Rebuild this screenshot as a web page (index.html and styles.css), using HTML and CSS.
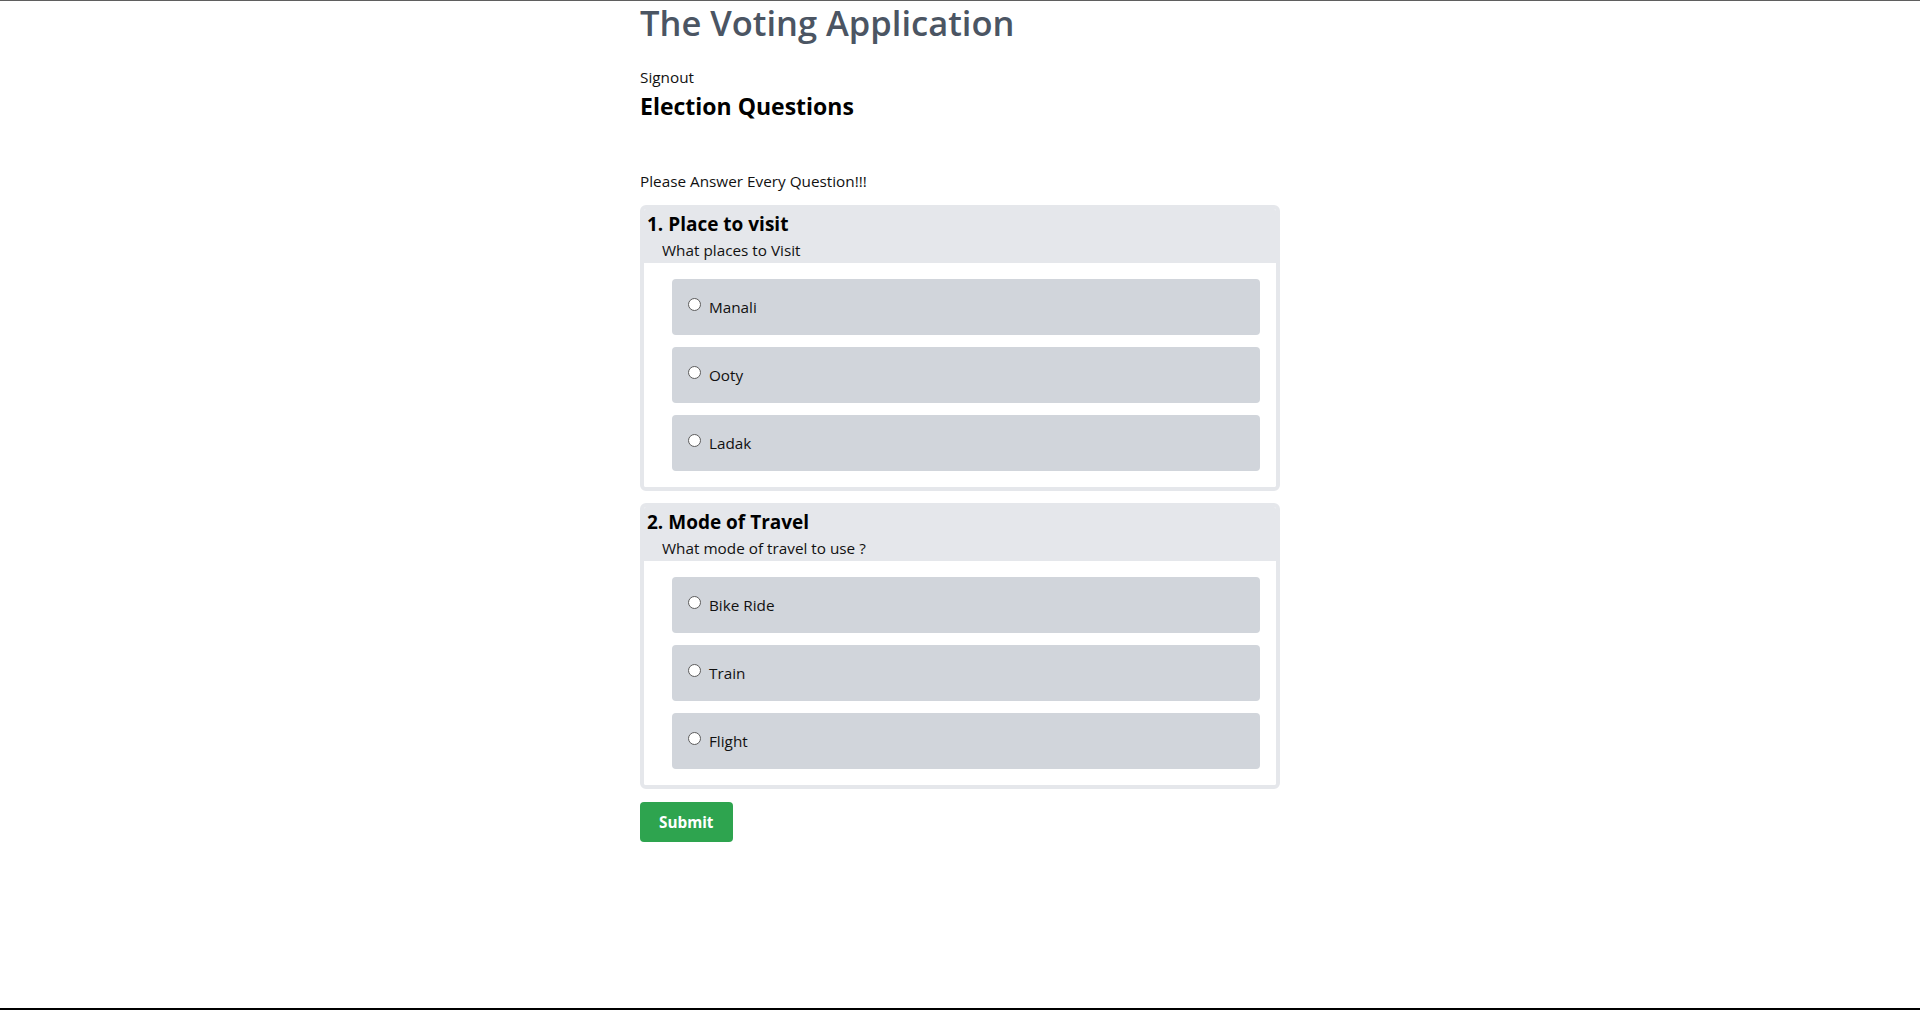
FILE: index.html
```html
<!DOCTYPE html>
<html lang="en">
<head>
<meta charset="utf-8">
<title>The Voting Application</title>
<link rel="stylesheet" href="styles.css">
</head>
<body>
<main class="container">
  <h1 class="app-title">The Voting Application</h1>
  <a class="signout" href="#">Signout</a>
  <h2 class="section-title">Election Questions</h2>
  <p class="notice">Please Answer Every Question!!!</p>
  <form class="ballot">
    <section class="question">
      <header class="q-head">
        <h3 class="q-title">1. Place to visit</h3>
        <p class="q-desc">What places to Visit</p>
      </header>
      <div class="q-options">
        <label class="option"><input type="radio" name="q1"> Manali</label>
        <label class="option"><input type="radio" name="q1"> Ooty</label>
        <label class="option"><input type="radio" name="q1"> Ladak</label>
      </div>
    </section>
    <section class="question">
      <header class="q-head">
        <h3 class="q-title">2. Mode of Travel</h3>
        <p class="q-desc">What mode of travel to use ?</p>
      </header>
      <div class="q-options">
        <label class="option"><input type="radio" name="q2"> Bike Ride</label>
        <label class="option"><input type="radio" name="q2"> Train</label>
        <label class="option"><input type="radio" name="q2"> Flight</label>
      </div>
    </section>
    <button type="submit" class="submit">Submit</button>
  </form>
</main>
</body>
</html>
```
FILE: styles.css
```css
* { box-sizing: border-box; }

html, body { height: 100%; }

body {
  margin: 0;
  min-height: 100vh;
  border-top: 1px solid #5f5f5f;
  border-bottom: 2px solid #000;
  background: #fff;
  color: #111;
  font-family: "Open Sans", "Noto Sans", "Liberation Sans", sans-serif;
  font-size: 15.3px;
  line-height: 24px;
}

.container {
  width: 640px;
  margin: 0 auto;
}

.app-title {
  margin: 0;
  padding-top: 2px;
  font-size: 34.5px;
  line-height: 40px;
  font-weight: 600;
  color: #4b5563;
}

.signout {
  display: block;
  margin-top: 22px;
  color: #111;
  text-decoration: none;
  font-size: 15.3px;
  line-height: 24px;
}

.section-title {
  margin: 1px 0 0;
  font-size: 23px;
  line-height: 32px;
  font-weight: 700;
  color: #000;
}

.notice {
  margin: 47px 0 0;
  font-size: 15.3px;
  line-height: 24px;
}

.ballot {
  margin-top: 12px;
  display: flex;
  flex-direction: column;
  align-items: flex-start;
}

.question {
  align-self: stretch;
  border: 4px solid #e5e7eb;
  border-radius: 6px;
  margin-bottom: 12px;
  overflow: hidden;
}

.q-head {
  background: #e5e7eb;
  padding: 2px 4px 1px 3px;
}

.q-title {
  margin: 0;
  font-size: 19px;
  line-height: 27px;
  font-weight: 700;
  color: #000;
}

.q-desc {
  margin: 0;
  padding-left: 15px;
  font-size: 15.3px;
  line-height: 24px;
}

.q-options {
  background: #fff;
  padding: 16px 16px 16px 28px;
  display: flex;
  flex-direction: column;
  gap: 12px;
}

.option {
  display: block;
  background: #d1d5db;
  border-radius: 4px;
  padding: 16px;
  height: 56px;
  font-size: 15.3px;
  line-height: 24px;
  color: #111;
}

.option input {
  -webkit-appearance: none;
  appearance: none;
  width: 13px;
  height: 13px;
  margin: 0 4px 0 0;
  border: 1px solid #5c5c5c;
  border-radius: 50%;
  background: #fff;
  vertical-align: 2px;
}

.submit {
  margin-top: 1px;
  border: 0;
  border-radius: 4px;
  background: #2ea44f;
  color: #fff;
  font-family: inherit;
  font-size: 15.3px;
  line-height: 24px;
  font-weight: 700;
  padding: 8px 19px;
  height: 40px;
  cursor: pointer;
}
```
